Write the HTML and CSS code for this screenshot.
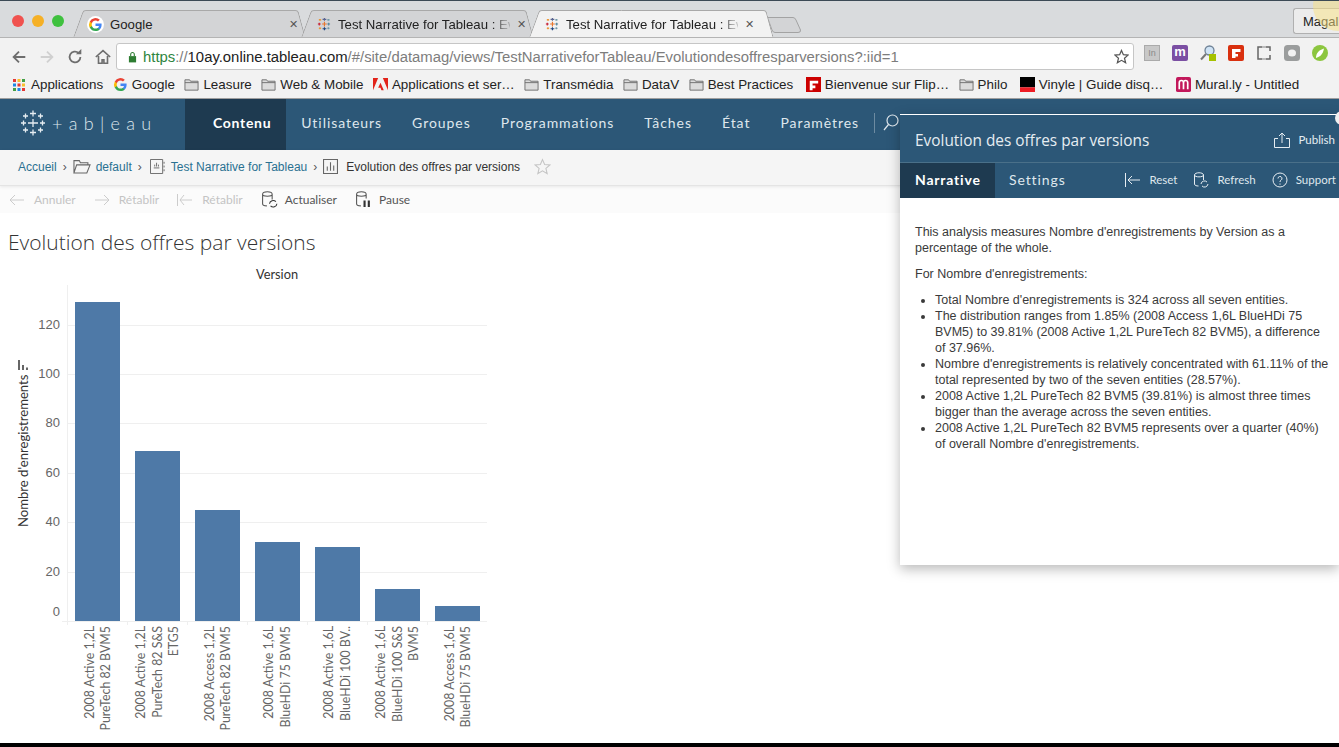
FILE: index.html
```html
<!DOCTYPE html>
<html lang="fr">
<head>
<meta charset="utf-8">
<title>Test Narrative for Tableau</title>
<link rel="stylesheet" href="styles.css">
</head>
<body>
<div class="page">
  <header class="tabstrip">
    <div class="lights"><i class="l red"></i><i class="l amber"></i><i class="l green"></i></div>
    <div class="tab">
      <span class="favwrap"><svg class="fav" viewBox="0 0 16 16"><use href="#g"/></svg></span>
      <span class="tab-t">Google</span><span class="x">✕</span>
    </div>
    <div class="tab">
      <svg class="fav" viewBox="0 0 16 16"><use href="#tb"/></svg>
      <span class="tab-t fade">Test Narrative for Tableau : Ev</span><span class="x">✕</span>
    </div>
    <div class="tab on">
      <svg class="fav" viewBox="0 0 16 16"><use href="#tb"/></svg>
      <span class="tab-t fade">Test Narrative for Tableau : Ev</span><span class="x">✕</span>
    </div>
    <svg class="newtab" viewBox="0 0 34 16"><path d="M.5.5H26Q28 .5 29 3L33.500 13Q34 15.500 31 15.500H8Q6 15.500 5 13z" fill="#d3d4d6" stroke="#a3a3a3"/></svg>
    <div class="profile">Magali</div>
  </header>

  <div class="urlbar">
    <svg class="nv" viewBox="0 0 20 20"><path d="M17 10H4M10 4l-6 6 6 6" fill="none" stroke="#6e6e6e" stroke-width="2"/></svg>
    <svg class="nv" viewBox="0 0 20 20"><path d="M3 10h13M10 4l6 6-6 6" fill="none" stroke="#d0d0d0" stroke-width="2"/></svg>
    <svg class="nv" viewBox="0 0 20 20"><path d="M16 10a6 6 0 1 1-2-4.500" fill="none" stroke="#6e6e6e" stroke-width="2"/><path d="M11 7h6V1z" fill="#6e6e6e"/></svg>
    <svg class="nv" viewBox="0 0 20 20"><path d="M2 10l8-7 8 7M5 9v8h4v-4h2v4h4V9" fill="none" stroke="#6e6e6e" stroke-width="1.800"/></svg>
    <div class="omni">
      <svg class="lock" viewBox="0 0 10 12"><path d="M1 5h8v7H1z" fill="#2e7d32"/><path d="M3 5V3a2 2 0 0 1 4 0v2" fill="none" stroke="#2e7d32" stroke-width="1.200"/></svg>
      <span class="url"><b class="https">https</b>://<b class="host">10ay.online.tableau.com</b>/#/site/datamag/views/TestNarrativeforTableau/Evolutiondesoffresparversions?:iid=1</span>
      <svg class="star" viewBox="0 0 16 16"><path d="M8 1.500l2 4.600 5 .4-3.800 3.300 1.200 4.900L8 12.100l-4.400 2.600 1.200-4.900L1 6.500l5-.4z" fill="none" stroke="#555" stroke-width="1.300"/></svg>
    </div>
    <div class="exts">
      <span class="ext e-in">In</span>
      <span class="ext e-m">m</span>
      <svg class="ext-s" viewBox="0 0 16 16"><circle cx="9.500" cy="5.500" r="4.500" fill="#cfe3f5" stroke="#6f8296" stroke-width="1.300"/><path d="M6 9L1 14.500" stroke="#777" stroke-width="2"/><rect x="9" y="9" width="7" height="7" fill="#a5c100"/></svg>
      <svg class="ext-s" viewBox="0 0 16 16"><rect width="16" height="16" rx="2" fill="#d9300f"/><path d="M4 4h8.500v3H7.500v2H10v2.500H7.500V13H4z" fill="#fff"/></svg>
      <svg class="ext-s" viewBox="0 0 16 16"><path d="M6 2H2v12h4M10 2h4v4M14 10v4h-4" fill="none" stroke="#666" stroke-width="1.500"/><path d="M6 2h4M6 14h4" stroke="#aaa" stroke-width="1.500"/></svg>
      <svg class="ext-s" viewBox="0 0 16 16"><rect width="16" height="16" rx="3.500" fill="#9b9d9d"/><ellipse cx="8" cy="8" rx="4" ry="3.500" fill="#f2f2f2"/></svg>
      <svg class="ext-s" viewBox="0 0 16 16"><circle cx="8" cy="8" r="8" fill="#8cc63f"/><path d="M4 13c0-5 3-8 8-9.500C11 8.500 9 11.500 4 13z" fill="#fff"/></svg>
    </div>
  </div>

  <nav class="bookmarks">
    <span class="bm"><svg class="apps" viewBox="0 0 12 12"><rect width="3" height="3" fill="#e53935"/><rect x="4.500" width="3" height="3" fill="#fbc02d"/><rect x="9" width="3" height="3" fill="#43a047"/><rect y="4.500" width="3" height="3" fill="#1e88e5"/><rect x="4.500" y="4.500" width="3" height="3" fill="#e53935"/><rect x="9" y="4.500" width="3" height="3" fill="#fbc02d"/><rect y="9" width="3" height="3" fill="#43a047"/><rect x="4.500" y="9" width="3" height="3" fill="#1e88e5"/><rect x="9" y="9" width="3" height="3" fill="#e53935"/></svg>Applications</span>
    <span class="bm"><svg class="ic" viewBox="0 0 16 16"><use href="#g"/></svg>Google</span>
    <span class="bm"><svg class="ic" viewBox="0 0 16 16"><use href="#fold"/></svg>Leasure</span>
    <span class="bm"><svg class="ic" viewBox="0 0 16 16"><use href="#fold"/></svg>Web &amp; Mobile</span>
    <span class="bm"><svg class="ic" viewBox="0 0 16 16"><path d="M0 1h5.500L0 14zM16 1h-5.500L16 14zM8 6l3.500 8H9l-1-2.500H5.500z" fill="#e2231a"/></svg>Applications et ser…</span>
    <span class="bm"><svg class="ic" viewBox="0 0 16 16"><use href="#fold"/></svg>Transmédia</span>
    <span class="bm"><svg class="ic" viewBox="0 0 16 16"><use href="#fold"/></svg>DataV</span>
    <span class="bm"><svg class="ic" viewBox="0 0 16 16"><use href="#fold"/></svg>Best Practices</span>
    <span class="bm wide"><svg class="ic" viewBox="0 0 16 16"><rect width="16" height="16" fill="#cc0000"/><path d="M4 4h9v3H7v2h3v3H7v2H4z" fill="#fff"/></svg>Bienvenue sur Flip…</span>
    <span class="bm"><svg class="ic" viewBox="0 0 16 16"><use href="#fold"/></svg>Philo</span>
    <span class="bm wide"><svg class="ic" viewBox="0 0 16 16"><rect width="16" height="11" fill="#000"/><rect y="11" width="16" height="5" fill="#ed1c24"/></svg>Vinyle | Guide disq…</span>
    <span class="bm wide"><svg class="ic" viewBox="0 0 16 16"><rect width="16" height="16" rx="2" fill="#c2185b"/><path d="M3.500 13V6a2 2 0 0 1 4.500 0v7M8 6a2 2 0 0 1 4.500 0v7" fill="none" stroke="#fff" stroke-width="1.800"/></svg>Mural.ly - Untitled</span>
  </nav>

  <nav class="tnav">
    <div class="logo">
      <svg class="logo-m" viewBox="0 0 26 26"><use href="#tbw"/></svg>
      <span class="logo-t">+ a b | e a u</span>
    </div>
    <a class="ti on">Contenu</a>
    <a class="ti">Utilisateurs</a>
    <a class="ti">Groupes</a>
    <a class="ti">Programmations</a>
    <a class="ti">Tâches</a>
    <a class="ti">État</a>
    <a class="ti">Paramètres</a>
    <span class="divider"></span>
    <svg class="search" viewBox="0 0 16 18"><circle cx="9.500" cy="6.500" r="5.500" fill="none" stroke="#dfe7ed" stroke-width="1.200"/><path d="M5.500 10.500L1 16" stroke="#dfe7ed" stroke-width="1.200"/></svg>
  </nav>

  <div class="crumbs">
    <a class="cl">Accueil</a><span class="sep">›</span>
    <svg class="ci" viewBox="0 0 16 14"><path d="M.5 13V1.500h5l1 2h7v2M.5 13h12l3-7.500H3z" fill="none" stroke="#666"/></svg>
    <a class="cl">default</a><span class="sep">›</span>
    <svg class="ci2 wb" viewBox="0 0 16 16"><path d="M.5.5h13v15H.5z" fill="none" stroke="#666"/><path d="M4 9.500h6M5 8V6M7 8V4M9 8V6M15 3v2M15 7v2M15 11v2" stroke="#666" fill="none"/></svg>
    <a class="cl">Test Narrative for Tableau</a><span class="sep">›</span>
    <svg class="ci2" viewBox="0 0 14 14"><path d="M.5.500h13v13H.5z" fill="none" stroke="#666"/><path d="M4 11V7M7 11V3M10 11V6" stroke="#666"/></svg>
    <span class="cc">Evolution des offres par versions</span>
    <svg class="cs" viewBox="0 0 16 16"><path d="M8 1.500l2 4.600 5 .4-3.800 3.300 1.200 4.900L8 12.100l-4.400 2.600 1.200-4.900L1 6.500l5-.4z" fill="none" stroke="#c4c4c4"/></svg>
  </div>

  <div class="vbar">
    <span class="vb off"><svg class="vi" viewBox="0 0 16 12"><path d="M15 6H1M6 1L1 6l5 5" fill="none" stroke="#ccc"/></svg>Annuler</span>
    <span class="vb off"><svg class="vi" viewBox="0 0 16 12"><path d="M1 6h14M10 1l5 5-5 5" fill="none" stroke="#ccc"/></svg>Rétablir</span>
    <span class="vb off"><svg class="vi" viewBox="0 0 16 12"><path d="M.5 0v12M15 6H3M7 1L3 6l4 5" fill="none" stroke="#ccc"/></svg>Rétablir</span>
    <span class="vb act"><svg class="vi2" viewBox="0 0 16 16"><use href="#db"/></svg>Actualiser</span>
    <span class="vb act"><svg class="vi2" viewBox="0 0 16 16"><path d="M1.500 3c0-3 9-3 9 0v4M1.500 3c0 2.500 9 2.500 9 0M1.500 3v9c0 1.500 2 2 4 2" fill="none" stroke="#555"/><path d="M9 9v6M13 9v6" stroke="#333" stroke-width="2"/></svg>Pause</span>
  </div>

  <main class="view">
    <h1 class="vtitle">Evolution des offres par versions</h1>
    <svg class="chart" viewBox="0 0 500 530" width="500" height="530">
      <text x="277" y="69" class="c-h">Version</text>
      <g class="grid">
        <path d="M67.500 75V415M62 411.500H487M67 115.500H487M67 164.500H487M67 213.500H487M67 263.500H487M67 312.500H487M67 362.500H487"/>
        <path d="M127.500 411v4M187.500 411v4M247.500 411v4M307.500 411v4M367.500 411v4M427.500 411v4"/>
      </g>
      <g class="bars">
        <rect x="75" y="92" width="45" height="319"/>
        <rect x="135" y="241" width="45" height="170"/>
        <rect x="195" y="300" width="45" height="111"/>
        <rect x="255" y="332" width="45" height="79"/>
        <rect x="315" y="337" width="45" height="74"/>
        <rect x="375" y="379" width="45" height="32"/>
        <rect x="435" y="396" width="45" height="15"/>
      </g>
      <g class="yl">
        <text x="60" y="119">120</text><text x="60" y="168">100</text><text x="60" y="217">80</text><text x="60" y="267">60</text><text x="60" y="316">40</text><text x="60" y="366">20</text><text x="60" y="406">0</text>
      </g>
      <text class="ya" transform="translate(28 317) rotate(-90)">Nombre d'enregistrements</text>
      <path d="M19 150v10M23 155v5M27 157.500v2.500" class="sorti"/>
      <g class="xl">
        <text transform="translate(94 416) rotate(-90)">2008 Active 1,2L</text>
        <text transform="translate(110 416) rotate(-90)">PureTech 82 BVM5</text>
        <text transform="translate(145 416) rotate(-90)">2008 Active 1,2L</text>
        <text transform="translate(162 416) rotate(-90)">PureTech 82 S&amp;S</text>
        <text transform="translate(178 416) rotate(-90)">ETG5</text>
        <text transform="translate(214 416) rotate(-90)">2008 Access 1,2L</text>
        <text transform="translate(230 416) rotate(-90)">PureTech 82 BVM5</text>
        <text transform="translate(273 416) rotate(-90)">2008 Active 1,6L</text>
        <text transform="translate(290 416) rotate(-90)">BlueHDi 75 BVM5</text>
        <text transform="translate(333 416) rotate(-90)">2008 Active 1,6L</text>
        <text transform="translate(350 416) rotate(-90)">BlueHDi 100 BV..</text>
        <text transform="translate(385 416) rotate(-90)">2008 Active 1,6L</text>
        <text transform="translate(402 416) rotate(-90)">BlueHDi 100 S&amp;S</text>
        <text transform="translate(418 416) rotate(-90)">BVM5</text>
        <text transform="translate(454 416) rotate(-90)">2008 Access 1,6L</text>
        <text transform="translate(470 416) rotate(-90)">BlueHDi 75 BVM5</text>
      </g>
    </svg>
  </main>
  <div class="blackbar"></div>
</div>

<aside class="panel">
  <div class="p-head">
    <h2 class="p-title">Evolution des offres par versions</h2>
    <span class="p-act"><svg class="pi" viewBox="0 0 16 16"><path d="M4 6.500H.5v9h15v-9H12M8 11V1M5 4l3-3 3 3" fill="none" stroke="#e6edf2"/></svg>Publish</span>
  </div>
  <div class="p-tabs">
    <span class="pt on">Narrative</span>
    <span class="pt">Settings</span>
    <span class="p-tools">
      <span class="p-act"><svg class="pi" viewBox="0 0 16 16"><path d="M.5 1v14M15 8H3M7 4L3 8l4 4" fill="none" stroke="#e6edf2"/></svg>Reset</span>
      <span class="p-act"><svg class="pi" viewBox="0 0 16 16"><use href="#dbw"/></svg>Refresh</span>
      <span class="p-act"><svg class="pi" viewBox="0 0 16 16"><circle cx="8" cy="8" r="7" fill="none" stroke="#e6edf2"/><path d="M6 6.500a2 2 0 1 1 3 1.700c-.8.500-1 .8-1 1.800M8 11.500v1.200" fill="none" stroke="#e6edf2"/></svg>Support</span>
    </span>
  </div>
  <div class="p-body">
    <p>This analysis measures Nombre d'enregistrements by Version as a percentage of the whole.</p>
    <p>For Nombre d'enregistrements:</p>
    <ul>
      <li>Total Nombre d'enregistrements is 324 across all seven entities.</li>
      <li>The distribution ranges from 1.85% (2008 Access 1,6L BlueHDi 75 BVM5) to 39.81% (2008 Active 1,2L PureTech 82 BVM5), a difference of 37.96%.</li>
      <li>Nombre d'enregistrements is relatively concentrated with 61.11% of the total represented by two of the seven entities (28.57%).</li>
      <li>2008 Active 1,2L PureTech 82 BVM5 (39.81%) is almost three times bigger than the average across the seven entities.</li>
      <li>2008 Active 1,2L PureTech 82 BVM5 represents over a quarter (40%) of overall Nombre d'enregistrements.</li>
    </ul>
  </div>
</aside>
<span class="avatar"></span>

<svg class="defs" width="0" height="0">
  <defs>
    <g id="g"><path d="M14.500 8.200c0-.5 0-1-.1-1.400H8v2.700h3.700a3.200 3.200 0 0 1-1.400 2.100v1.700h2.200c1.300-1.200 2-3 2-5.100z" fill="#4285f4"/><path d="M8 15c1.900 0 3.400-.6 4.500-1.700l-2.200-1.700c-.6.400-1.400.7-2.300.7-1.800 0-3.300-1.200-3.800-2.800H1.900V11.200A7 7 0 0 0 8 15z" fill="#34a853"/><path d="M4.200 9.500a4.200 4.200 0 0 1 0-2.900V4.800H1.900a7 7 0 0 0 0 6.400z" fill="#fbbc05"/><path d="M8 3.800c1 0 1.900.3 2.600 1l2-2A7 7 0 0 0 1.900 4.800l2.300 1.800C4.700 5 6.200 3.800 8 3.800z" fill="#ea4335"/></g>
    <g id="tb" fill="none" stroke-width="1.200"><path d="M6.500 7.500h5M9 5v5" stroke="#e8762d"/><path d="M2 7.500h3M3.500 6v3" stroke="#c72035"/><path d="M12 7.500h3M13.500 6v3" stroke="#59879b"/><path d="M7 2.500h4M9 1v3" stroke="#5b6591"/><path d="M7 12.500h4M9 11v3" stroke="#1f457e"/><path d="M3 3h2.500M4.200 2v2M3 12h2.500M4.200 11v2" stroke="#eb912b"/><path d="M12 3h2.500M13.200 2v2M12 12h2.500M13.200 11v2" stroke="#7099a6"/></g>
    <g id="tbw" fill="none" stroke="#e6edf2" stroke-width="1.300"><path d="M8 13h10M13 9v8M1 13h5M3.500 10.500v5M20 13h5M22.500 10.500v5M10 3.500h6M13 .5v6M10 22.500h6M13 19.500v6M3 6h5M5.500 3.500v5M18 6h5M20.500 3.500v5M3 20h5M5.500 17.500v5M18 20h5M20.500 17.500v5"/></g>
    <g id="fold"><path d="M1 3h5l1 1.500h8V14H1z" fill="#dcdcdc" stroke="#6f6f6f"/><path d="M1 6h14" stroke="#6f6f6f"/></g>
    <g id="db"><path d="M1.500 3c0-3 9-3 9 0v5M1.500 3c0 2.500 9 2.500 9 0M1.500 3v9c0 1.500 2 2 4 2" fill="none" stroke="#555"/><path d="M8 12a3.500 3.500 0 0 1 6-2M15 12a3.500 3.500 0 0 1-6 2" fill="none" stroke="#333"/></g>
    <g id="dbw"><path d="M1.500 3c0-3 9-3 9 0v5M1.500 3c0 2.500 9 2.500 9 0M1.500 3v9c0 1.500 2 2 4 2" fill="none" stroke="#e6edf2"/><path d="M8 12a3.500 3.500 0 0 1 6-2M15 12a3.500 3.500 0 0 1-6 2" fill="none" stroke="#e6edf2"/></g>
  </defs>
</svg>
</body>
</html>
```

FILE: styles.css
```css
* { box-sizing: border-box; }
html, body { margin: 0; height: 100%; overflow: hidden; background: #fff; }
body { position: relative; font-family: "Liberation Sans", Arial, sans-serif; color: #222; }
.defs { position: absolute; }
.page { height: 747px; display: flex; flex-direction: column; border-top: 1px solid #3c4a55; }

.tabstrip { height: 37px; flex: none; display: flex; align-items: flex-end; background: #d9dbdd; padding-left: 73px; border-bottom: 1px solid #b4b4b4; position: relative; z-index: 0; overflow: hidden; }
.tabstrip::after { content: ""; position: absolute; right: -24px; top: -20px; width: 50px; height: 50px; border-radius: 50%; background: rgba(250, 225, 130, .5); }
.lights { position: absolute; left: 12px; top: 14px; display: flex; gap: 8px; }
.l { width: 12px; height: 12px; border-radius: 50%; display: block; }
.red { background: #f0524f; } .amber { background: #f5b026; } .green { background: #3fc13f; }
.tab { width: 228px; height: 28px; flex: none; padding: 0 0 0 15px; display: flex; align-items: center; gap: 7px; font-size: 13.200px; position: relative; z-index: 0; margin-bottom: -1px; }
.tab::before, .tab::after { content: ""; position: absolute; top: 0; bottom: 0; width: 60%; z-index: -1; background: #d3d4d6; border-top: 1px solid #a9a9a9; }
.tab::before { left: 5px; transform: skewX(-20deg); border-left: 1px solid #a0a0a0; border-radius: 3px 0 0 0; }
.tab::after { right: -1px; transform: skewX(15deg); border-right: 1px solid #a0a0a0; border-radius: 0 3px 0 0; }
.tab.on { width: 240px; z-index: 1; padding-right: 12px; }
.tab.on::before, .tab.on::after { background: #f2f2f2; }
.fav { width: 15px; height: 15px; flex: none; display: block; }
.favwrap { background: #fff; border-radius: 50%; flex: none; padding: 1px; margin: -1px; }
.tab-t { flex: 1; min-width: 0; white-space: nowrap; color: #222; }
.fade { color: #222; -webkit-mask-image: linear-gradient(to right, #000 155px, rgba(0,0,0,.35) 166px, transparent 180px); mask-image: linear-gradient(to right, #000 155px, rgba(0,0,0,.35) 166px, transparent 180px); }
.x { font-size: 11px; color: #555; flex: none; width: 12px; }
.newtab { width: 34px; height: 16px; flex: none; margin: 0 0 4px -2px; }
.profile { position: absolute; right: 0; top: 7px; width: 46px; height: 26px; padding: 5px 0 0 9px; background: #ececec; border: 1px solid #b0b0b0; border-right: 0; border-radius: 3px 0 0 3px; font-size: 13px; overflow: hidden; white-space: nowrap; }

.urlbar { height: 34px; flex: none; display: flex; align-items: flex-start; gap: 10px; padding: 5px 0 0 10px; background: #f2f2f2; }
.nv { width: 18px; height: 18px; flex: none; margin-top: 5px; }
.omni { margin-left: -6px; width: 1018px; height: 27px; flex: none; display: flex; align-items: center; gap: 6px; padding: 0 4px 0 11px; background: #fff; border: 1px solid #c6c6c6; border-radius: 3px; }
.lock { width: 9px; height: 12px; flex: none; }
.url { flex: 1; min-width: 0; font-size: 14.860px; color: #7d7d7d; white-space: nowrap; }
.https { font-weight: 400; color: #2e8540; }
.host { font-weight: 400; color: #222; }
.star { width: 15px; height: 15px; flex: none; }
.exts { display: flex; align-items: center; gap: 12px; margin: 2px 0 0 0; }
.ext { width: 16px; height: 16px; display: block; flex: none; text-align: center; }
.ext-s { width: 16px; height: 16px; flex: none; }
.e-in { background: #c8c8c8; border: 1px solid #aaa; color: #8a8a8a; font-size: 9px; line-height: 14px; }
.e-m { background: #7b4fa3; color: #fff; font-size: 13px; line-height: 13px; border-radius: 2px; font-weight: 700; }

.bookmarks { height: 27px; flex: none; display: flex; align-items: center; gap: 9.500px; padding: 0 0 1px 13px; background: #f2f2f2; font-size: 13.400px; border-bottom: 1px solid #9e9e9e; white-space: nowrap; }
.bm { display: flex; align-items: center; gap: 4px; }
.bm.wide { margin-left: 3px; }
.apps { width: 12px; height: 12px; margin-right: 2px; }
.ic { width: 15px; height: 15px; flex: none; }

.tnav { height: 51px; flex: none; display: flex; align-items: stretch; background: #2c5777; color: #dfe7ed; font-family: Lato, sans-serif; font-size: 14px; }
.logo { width: 185px; display: flex; align-items: center; gap: 6px; padding: 0 0 3px 20px; }
.logo-m { width: 26px; height: 26px; flex: none; }
.logo-t { font-size: 18px; font-weight: 300; white-space: nowrap; letter-spacing: .7px; }
.ti { display: flex; align-items: center; padding: 0 15px 5px; letter-spacing: .95px; }
.ti.on { background: #1e3a50; color: #fff; padding: 0 15px 5px 28px; font-weight: 700; letter-spacing: .7px; }
.divider { width: 1px; height: 20px; align-self: center; margin-bottom: 3px; background: #6d8ba1; }
.search { width: 16px; height: 18px; align-self: center; margin: 0 0 3px 8px; }

.crumbs { height: 36px; flex: none; display: flex; align-items: center; gap: 5px; padding: 0 0 2px 18px; background: #f5f5f5; font-size: 12px; border-bottom: 1px solid #e4e4e4; box-shadow: 0 1px 3px rgba(0,0,0,.08); position: relative; }
.cl { color: #2a7191; }
.cc { color: #333; margin-left: 3px; }
.sep { color: #555; margin: 0 1px; }
.ci { width: 18px; height: 15px; }
.ci2 { width: 15px; height: 15px; }
.wb { margin: 0 1px 0 2px; }
.cs { width: 17px; height: 17px; margin-left: 9px; }

.vbar { height: 27px; flex: none; display: flex; align-items: center; padding-left: 9px; background: #fbfbfb; font-family: Lato, sans-serif; font-size: 12px; color: #555; }
.vb { display: flex; align-items: center; gap: 9px; margin-right: 18px; }
.vb.off { color: #c4c4c4; }
.vb.act { gap: 7px; }
.vi { width: 16px; height: 12px; }
.vi2 { width: 17px; height: 17px; }

.view { flex: 1; min-height: 0; overflow: hidden; position: relative; background: #fff; }
.vtitle { margin: 16px 0 0 8px; font-family: "Open Sans", sans-serif; font-weight: 300; font-size: 21px; line-height: 26px; color: #333; }
.chart { display: block; margin-top: -45px; }
.c-h { font: 12.800px Lato, sans-serif; text-anchor: middle; fill: #333; }
.grid path { fill: none; stroke: #efefef; }
.bars rect { fill: #4e79a7; }
.yl text { font: 13px "Liberation Sans", sans-serif; text-anchor: end; fill: #666; }
.ya { font: 13.100px Lato, sans-serif; fill: #333; }
.sorti { fill: none; stroke: #666; stroke-width: 2; }
.xl text { font: 12.400px Lato, sans-serif; fill: #666; text-anchor: end; }
.blackbar { height: 4px; flex: none; background: #000; }

.panel { position: absolute; left: 900px; top: 114px; width: 439px; height: 451px; background: #fff; border-top: 1px solid #fff; box-shadow: 0 4px 12px rgba(0,0,0,.28); overflow: hidden; }
.p-head { height: 48px; display: flex; align-items: center; justify-content: space-between; padding: 2px 4px 0 15px; background: #2c5777; color: #e6edf2; border-bottom: 1px solid #4a7089; }
.p-title { margin: 2px 0 0; font-family: "Open Sans", sans-serif; font-weight: 400; font-size: 15.400px; }
.p-act { display: flex; align-items: center; gap: 8px; font-family: Lato, sans-serif; font-size: 11.500px; white-space: nowrap; letter-spacing: 0; }
.pi { width: 16px; height: 16px; flex: none; }
.p-tabs { height: 35px; display: flex; align-items: stretch; background: #2c5777; color: #dfe7ed; font-family: Lato, sans-serif; font-size: 14px; letter-spacing: .9px; }
.pt { display: flex; align-items: center; padding: 0 14px 2px 14px; }
.pt.on { width: 95px; padding-left: 15px; background: #1e3a50; color: #fff; font-weight: 700; letter-spacing: .8px; }
.p-tools { margin-left: auto; display: flex; align-items: center; gap: 16px; padding: 0 3px 2px 0; }
.p-body { padding: 26px 9px 0 15px; font-size: 12.500px; line-height: 16px; color: #3a3a3a; }
.p-body p { margin: 0 0 10px; }
.p-body ul { margin: 0; padding-left: 20px; }
.avatar { position: absolute; left: 1335px; top: 111px; width: 14px; height: 14px; border-radius: 50%; background: #f0f0f0; }
```
